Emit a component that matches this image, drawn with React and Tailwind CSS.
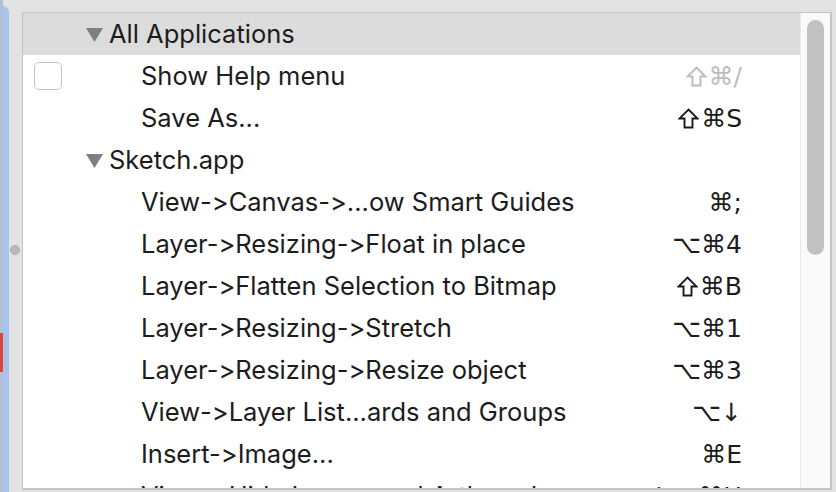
import React from 'react';

const rows = [
  { type: 'group', label: 'All Applications', header: true },
  { type: 'item', label: 'Show Help menu', keys: '⇧⌘/', muted: true, checkbox: true },
  { type: 'item', label: 'Save As...', keys: '⇧⌘S' },
  { type: 'group', label: 'Sketch.app' },
  { type: 'item', label: 'View->Canvas->...ow Smart Guides', keys: '⌘;' },
  { type: 'item', label: 'Layer->Resizing->Float in place', keys: '⌥⌘4' },
  { type: 'item', label: 'Layer->Flatten Selection to Bitmap', keys: '⇧⌘B' },
  { type: 'item', label: 'Layer->Resizing->Stretch', keys: '⌥⌘1' },
  { type: 'item', label: 'Layer->Resizing->Resize object', keys: '⌥⌘3' },
  { type: 'item', label: 'View->Layer List...ards and Groups', keys: '⌥↓' },
  { type: 'item', label: 'Insert->Image...', keys: '⌘E' },
  { type: 'item', label: 'View->Hide Layers and Artboards', keys: '⌃⌥⌘H' },
];

const font = { fontFamily: 'Inter, "DejaVu Sans", sans-serif' };

const Triangle = () => (
  <svg width="17" height="15" viewBox="0 0 17 15" className="shrink-0">
    <path d="M0 1 L17 1 L8.5 15 Z" fill="#7f7f7f" />
  </svg>
);

// outlined shift arrow
const Shift = ({ color }) => (
  <svg width="21" height="21" viewBox="0 0 21 21" className="mr-[2px]">
    <path
      d="M10.5 1.5 L19.5 10.5 L14.5 10.5 L14.5 19.5 L6.5 19.5 L6.5 10.5 L1.5 10.5 Z"
      fill="none"
      stroke={color}
      strokeWidth="1.9"
      strokeLinejoin="miter"
    />
  </svg>
);

const Keys = ({ keys, muted }) => {
  const color = muted ? '#bcbcbc' : '#1c1c1c';
  return (
    <span
      className={`flex items-center text-[25px] leading-none whitespace-nowrap ${muted ? 'text-[#bcbcbc]' : 'text-[#1c1c1c]'}`}
      style={{ fontFamily: '"DejaVu Sans", Inter, sans-serif' }}
    >
      {[...keys].map((k, i) =>
        k === '⇧' ? <Shift key={i} color={color} /> : <span key={i}>{k}</span>
      )}
    </span>
  );
};

const Row = ({ row }) => {
  if (row.type === 'group') {
    return (
      <div className={`h-[42px] flex items-center pl-[63px] ${row.header ? 'bg-[#dcdcdc]' : ''}`}>
        <Triangle />
        <span className="ml-[6px] text-[25.5px] text-[#1c1c1c] leading-none">{row.label}</span>
      </div>
    );
  }
  return (
    <div className="h-[42px] flex items-center pr-[58px]">
      <div className="w-[118px] shrink-0 pl-[11px]">
        {row.checkbox && (
          <div className="w-[28px] h-[28px] rounded-[5px] border border-[#c6c6c6] bg-white" />
        )}
      </div>
      <span className="flex-1 text-[25.5px] text-[#1c1c1c] leading-none whitespace-nowrap">{row.label}</span>
      <Keys keys={row.keys} muted={row.muted} />
    </div>
  );
};

export default function App() {
  return (
    <div
      className="w-[836px] h-[492px] bg-[#e3e3e3] flex overflow-hidden [font-feature-settings:'calt'_0]"
      style={font}
    >
      {/* window edge */}
      <div className="w-[3px] flex flex-col bg-[#b3bfd2]">
        <div className="h-[333px]" />
        <div className="h-[39px] bg-[#e0453a]" />
      </div>
      <div className="w-[6px] bg-[#a5c3ec] mt-[6px] rounded-tr-[6px]" />
      {/* splitter */}
      <div className="w-[13px] flex flex-col pt-[245px] pl-[1px]">
        <div className="w-[10px] h-[10px] rounded-full bg-[#b9b9b9] border border-[#acacac]" />
      </div>
      {/* list panel */}
      <div className="w-[810px] mt-[12px] h-[478px] border border-[#c4c4c4] border-b-2 border-r-2 bg-white flex overflow-hidden">
        <div className="flex-1 overflow-hidden">
          {rows.map((row, i) => (
            <Row key={i} row={row} />
          ))}
        </div>
        <div className="w-[30px] bg-[#f9f9f9] border-l border-[#e8e8e8] pt-[7px] pl-[6px]">
          <div className="w-[17px] h-[235px] rounded-full bg-[#c1c1c1]" />
        </div>
      </div>
    </div>
  );
}
